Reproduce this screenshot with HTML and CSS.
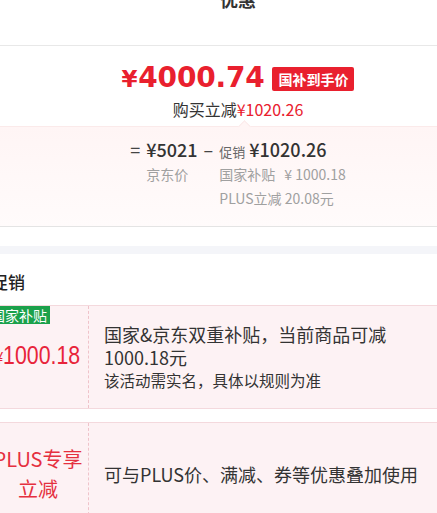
FILE: index.html
```html
<!DOCTYPE html>
<html>
<head>
  <meta http-equiv="content-type" content="text/html; charset=utf-8" />
  <title>优惠</title>
  <link rel="stylesheet" href="styles.css">
</head>

<body>
  <div class="page">
    <div class="deal">
      <div class="deal-head">
        <h2 class="deal-title">优惠</h2>
      </div>

      <div class="final">
        <div class="final-row">
          <span class="final-price"><span class="final-yen">¥</span>4000.74</span>
          <span class="final-tag">国补到手价</span>
        </div>
        <div class="final-save">购买立减<em>¥1020.26</em></div>
      </div>

      <div class="calc">
        <span class="calc-op">=</span>
        <div class="calc-col">
          <div class="calc-num">¥5021</div>
          <div class="calc-label">京东价</div>
        </div>
        <span class="calc-op">–</span>
        <div class="calc-col">
          <div class="calc-num"><small>促销</small> ¥1020.26</div>
          <div class="calc-label">国家补贴<span class="calc-gap"></span>¥ 1000.18</div>
          <div class="calc-label">PLUS立减 20.08元</div>
        </div>
      </div>
    </div>

    <div class="band"></div>

    <div class="promo">
      <h3 class="promo-title">促销</h3>

      <div class="promo-card">
        <div class="promo-side">
          <span class="promo-tag">国家补贴</span>
          <span class="promo-price"><span class="promo-yen">¥</span>1000.18</span>
        </div>
        <div class="promo-body">
          <p class="promo-main">国家&amp;京东双重补贴，当前商品可减1000.18元</p>
          <p class="promo-sub">该活动需实名，具体以规则为准</p>
        </div>
      </div>

      <div class="promo-card">
        <div class="promo-side">
          <span class="promo-name">PLUS专享<br>立减</span>
        </div>
        <div class="promo-body">
          <p class="promo-main">可与PLUS价、满减、券等优惠叠加使用</p>
        </div>
      </div>
    </div>
  </div>
</body>

</html>
```

FILE: styles.css
```css
body {
  margin: 0;
  overflow: hidden;
  background: #fff;
  color: #333;
  font-family: "Noto Sans CJK SC", "Noto Sans", sans-serif;
}
p, h2, h3 {
  margin: 0;
}
.page {
  width: 500px;
  margin: -13px 0 0 -12px;
}

/* top block */
.deal {
  padding-bottom: 19px;
}
.deal-head {
  height: 58px;
  border-bottom: 1px solid #e8e8e8;
}
.deal-title {
  text-align: center;
  font-size: 18px;
  line-height: 24px;
  font-weight: bold;
  color: #333;
}
.final {
  padding: 15px 0 6px;
  text-align: center;
}
.final-row {
  display: flex;
  justify-content: center;
  align-items: center;
  gap: 8px;
  height: 34px;
}
.final-price {
  font-family: "DejaVu Sans", sans-serif;
  font-weight: bold;
  font-size: 28px;
  line-height: 34px;
  color: #e9202e;
  letter-spacing: -0.2px;
}
.final-yen {
  font-size: 23px;
  line-height: 1;
  margin-right: 1px;
}
.final-tag {
  background: #e9202e;
  color: #fff;
  font-size: 14px;
  font-weight: bold;
  line-height: 24px;
  padding: 0 6px;
  border-radius: 2px;
  margin-top: 2px;
}
.final-save {
  margin-top: 3px;
  font-size: 16px;
  line-height: 22px;
  color: #333;
}
.final-save em {
  font-style: normal;
  color: #e9202e;
}

/* price breakdown box */
.calc {
  position: relative;
  display: flex;
  justify-content: center;
  align-items: flex-start;
  gap: 6px;
  padding: 9px 0 16px;
  border-top: 1px solid #fbeaea;
  border-bottom: 1px solid #e4e4e4;
  background: linear-gradient(#fff5f5, #fffbfb);
}
.calc::before {
  content: "";
  position: absolute;
  top: -5px;
  left: 252px;
  width: 8px;
  height: 8px;
  background: #fff5f5;
  border-top: 1px solid #fbeaea;
  border-left: 1px solid #fbeaea;
  transform: rotate(45deg);
}
.calc-op {
  font-size: 18px;
  line-height: 26px;
  color: #444;
}
.calc-num {
  height: 26px;
  font-size: 18px;
  line-height: 26px;
  font-weight: 500;
  color: #333;
  white-space: nowrap;
}
.calc-num small {
  font-size: 13px;
  line-height: 1;
  font-weight: normal;
  color: #666;
}
.calc-label {
  font-size: 14px;
  line-height: 24px;
  color: #a0a0a0;
  white-space: nowrap;
}
.calc-gap {
  display: inline-block;
  width: 9px;
}

.band {
  height: 8px;
  background: #f4f5f9;
}

/* promotions */
.promo {
  padding-top: 16px;
}
.promo-title {
  padding-left: 3px;
  margin-bottom: 11px;
  font-size: 17px;
  line-height: 24px;
  font-weight: 500;
  color: #222;
}
.promo-card {
  display: flex;
  min-height: 102px;
  margin-bottom: 13px;
  background: #fdf2f4;
  border-top: 1px solid #f4d9dd;
  border-bottom: 1px solid #f4d9dd;
}
.promo-side {
  position: relative;
  width: 100px;
  flex-shrink: 0;
  display: flex;
  align-items: center;
  justify-content: center;
  border-right: 1px dashed #efc3ca;
}
.promo-tag {
  position: absolute;
  top: 0;
  left: 0;
  padding: 0 3px;
  background: #1ba14b;
  color: #fff;
  font-size: 14px;
  line-height: 18px;
}
.promo-price {
  display: inline-block;
  font-family: "Liberation Sans", sans-serif;
  font-size: 26px;
  line-height: 30px;
  color: #e8243a;
  white-space: nowrap;
  transform: scaleX(0.82);
}
.promo-yen {
  font-size: 17px;
}
.promo-name {
  text-align: center;
  font-size: 20px;
  line-height: 30px;
  color: #e5303f;
}
.promo-body {
  flex: 1;
  display: flex;
  flex-direction: column;
  justify-content: center;
  padding: 0 54px 0 15px;
}
.promo-main {
  font-size: 18px;
  line-height: 23px;
  color: #333;
}
.promo-sub {
  font-size: 15.5px;
  line-height: 22px;
  color: #333;
}
```
